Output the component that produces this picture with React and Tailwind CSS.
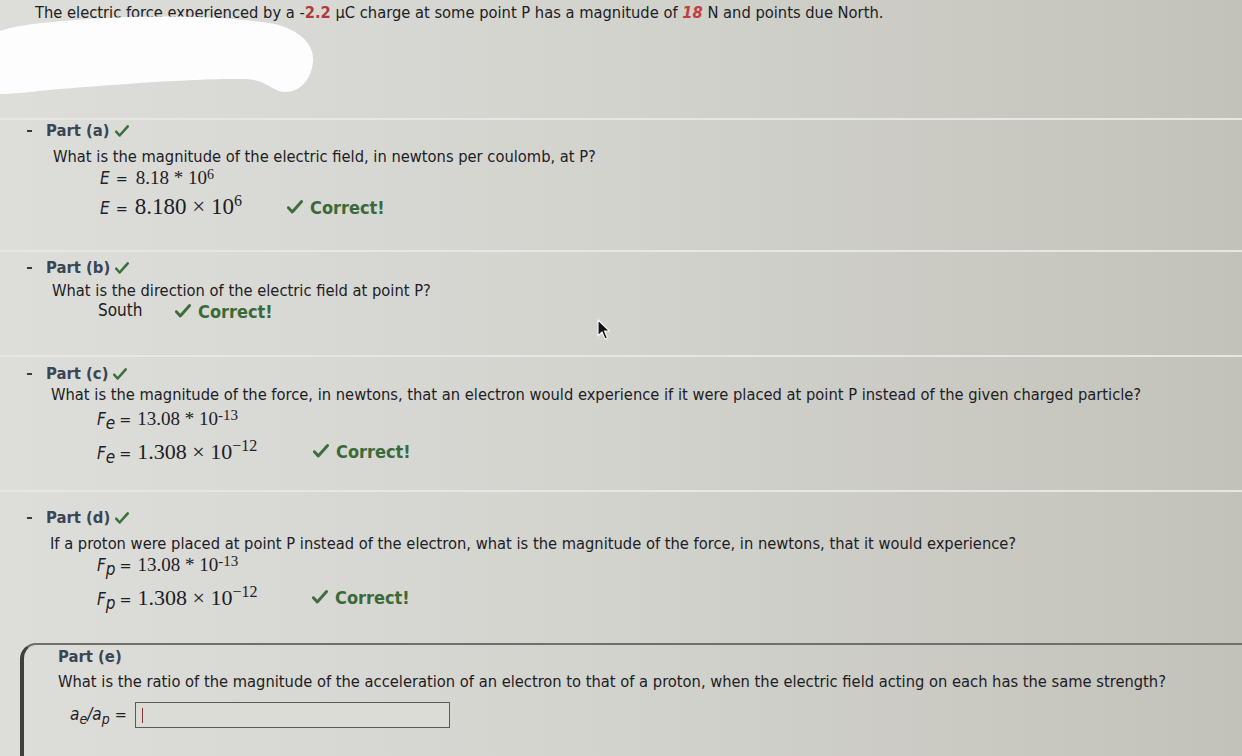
import React from "react";

const sans = "font-['DejaVu_Sans_Condensed','DejaVu_Sans',sans-serif]";
const serif = "font-['Liberation_Serif','Times_New_Roman',serif]";

const Check = ({ size = 14, className = "" }) => (
  <svg className={className} width={size} height={size * 0.85} viewBox="0 0 14 12">
    <path d="M1.2 6.8 L4.6 10.6 L12.8 1.4" fill="none" stroke="#3f6d3b" strokeWidth="2.6" strokeLinecap="round" strokeLinejoin="round" />
  </svg>
);

const Correct = () => (
  <span className="flex items-center gap-[7px] text-[18px] font-bold text-[#3b6a38]">
    <Check size={16} />
    <span>Correct!</span>
  </span>
);

const PartTitle = ({ label, done = true }) => (
  <div className="flex items-center h-5">
    <div className="ml-[27px] w-[5px] h-[2px] bg-[#3a3a3a]" />
    <span className="ml-[14px] font-bold text-[16.5px] text-[#3a4654]">Part ({label})</span>
    {done && <Check size={14} className="ml-[5px]" />}
  </div>
);

const Sym = ({ s, sub }) => (
  <span className="italic text-[17px]">
    {s}
    {sub && <sub className="text-[17px] italic">{sub}</sub>}
  </span>
);

export default function App() {
  return (
    <div
      className={`relative w-[1242px] h-[756px] overflow-hidden bg-linear-to-r from-[#dddeda] via-[#d3d3ce] to-[#c3c2ba] text-[#1d2024] ${sans}`}
    >
      {/* intro */}
      <p className="pl-[35px] pt-[3px] leading-[20px] text-[16.35px]">
        The electric force experienced by a -
        <span className="font-bold text-[#b23a3a]">2.2</span> μC charge at some point P has a magnitude of{" "}
        <span className="font-bold italic text-[#c0403f]">18</span> N and points due North.
      </p>

      {/* white redaction blob */}
      <svg className="absolute left-0 top-0" width="330" height="110" viewBox="0 0 330 110">
        <path
          d="M0 31 C20 24 60 20 130 17 C190 15 240 18 275 24 C300 30 315 45 313 62 C311 80 300 92 285 92 C272 92 268 80 245 79 C200 78 120 84 60 89 C30 92 10 94 0 94 Z"
          fill="#fdfdfd"
        />
      </svg>

      {/* mouse cursor */}
      <svg className="absolute left-[597px] top-[319px]" width="16" height="24" viewBox="0 0 16 24">
        <path d="M1 1 L1 17 L5 13 L8 20 L10.5 19 L7.5 12 L12.5 12 Z" fill="#111" stroke="#f4f4f4" strokeWidth="1.2" strokeLinejoin="round" />
      </svg>

      <div className="mt-[95px]">
        {/* Part a */}
        <section className="h-[132px] border-t-2 border-[#e6e6e2] pt-[1px]">
          <PartTitle label="a" />
          <p className="ml-[53px] mt-[6px] leading-[20px] text-[16.35px]">
            What is the magnitude of the electric field, in newtons per coulomb, at P?
          </p>
          <div className="ml-[100px] mt-[1px] flex items-baseline h-[20px] leading-[20px]">
            <Sym s="E" />
            <span className="ml-[6px] text-[16px]">=</span>
            <span className={`ml-[8px] text-[19px] ${serif}`}>
              8.18 * 10<sup className="text-[14px] top-[-0.35em]">6</sup>
            </span>
          </div>
          <div className="ml-[100px] mt-[7px] flex items-center h-[24px]">
            <div className="w-[187px] flex items-baseline">
              <Sym s="E" />
              <span className="ml-[6px] text-[16px]">=</span>
              <span className={`ml-[7px] text-[23px] ${serif}`}>
                8.180 × 10<sup className="text-[16px]">6</sup>
              </span>
            </div>
            <Correct />
          </div>
        </section>

        {/* Part b */}
        <section className="h-[105px] border-t-2 border-[#e6e6e2] pt-[6px]">
          <PartTitle label="b" />
          <p className="ml-[52px] mt-[3px] leading-[20px] text-[16.35px]">
            What is the direction of the electric field at point P?
          </p>
          <div className="ml-[98px] flex items-center h-[20px]">
            <span className="w-[77px] text-[17px]">South</span>
            <Correct />
          </div>
        </section>

        {/* Part c */}
        <section className="h-[135px] border-t-2 border-[#e6e6e2] pt-[7px]">
          <PartTitle label="c" />
          <p className="ml-[51px] mt-[1px] leading-[20px] text-[16.35px]">
            What is the magnitude of the force, in newtons, that an electron would experience if it were placed at point P instead of the given charged particle?
          </p>
          <div className="ml-[97px] mt-[4px] flex items-baseline h-[20px] leading-[20px]">
            <Sym s="F" sub="e" />
            <span className="ml-[4px] text-[16px]">=</span>
            <span className={`ml-[6px] text-[19px] ${serif}`}>
              13.08 * 10<sup className="text-[15px] top-[-0.35em]">-13</sup>
            </span>
          </div>
          <div className="ml-[97px] mt-[10px] flex items-center h-[24px]">
            <div className="w-[216px] flex items-baseline">
              <Sym s="F" sub="e" />
              <span className="ml-[4px] text-[16px]">=</span>
              <span className={`ml-[6px] text-[22px] ${serif}`}>
                1.308 × 10<sup className="text-[16px]">−12</sup>
              </span>
            </div>
            <Correct />
          </div>
        </section>

        {/* Part d */}
        <section className="h-[135px] border-t-2 border-[#e6e6e2] pt-[16px]">
          <PartTitle label="d" />
          <p className="ml-[50px] mt-[6px] leading-[20px] text-[16.35px]">
            If a proton were placed at point P instead of the electron, what is the magnitude of the force, in newtons, that it would experience?
          </p>
          <div className="ml-[97px] mt-[1px] flex items-baseline h-[20px] leading-[20px]">
            <Sym s="F" sub="p" />
            <span className="ml-[4px] text-[16px]">=</span>
            <span className={`ml-[6px] text-[19px] ${serif}`}>
              13.08 * 10<sup className="text-[15px] top-[-0.35em]">-13</sup>
            </span>
          </div>
          <div className="ml-[97px] mt-[10px] flex items-center h-[24px]">
            <div className="w-[215px] flex items-baseline">
              <Sym s="F" sub="p" />
              <span className="ml-[4px] text-[16px]">=</span>
              <span className={`ml-[6px] text-[22px] ${serif}`}>
                1.308 × 10<sup className="text-[16px]">−12</sup>
              </span>
            </div>
            <Correct />
          </div>
        </section>

        {/* Part e */}
        <section className="mt-[18px] ml-[20px] h-[120px] border-l-4 border-t-2 border-l-[#3f3f3d] border-t-[#6f6f6c] rounded-tl-[16px] pt-[2px] pl-[34px]">
          <div className="h-5 flex items-center font-bold text-[16.5px] text-[#3a4654]">Part (e)</div>
          <p className="mt-[5px] leading-[20px] text-[16.35px]">
            What is the ratio of the magnitude of the acceleration of an electron to that of a proton, when the electric field acting on each has the same strength?
          </p>
          <div className="mt-[10px] ml-[12px] flex items-center h-[26px]">
            <span className="italic text-[17px]">
              a<sub className="text-[14px]">e</sub>/a<sub className="text-[14px]">p</sub>
            </span>
            <span className="ml-[5px] text-[16px]">=</span>
            <div className="ml-[8px] w-[315px] h-[26px] border border-[#5a5a58] bg-[#dcdcd7] flex items-center pl-[6px]">
              <div className="w-px h-[15px] bg-[#8a3535]" />
            </div>
          </div>
        </section>
      </div>
    </div>
  );
}
